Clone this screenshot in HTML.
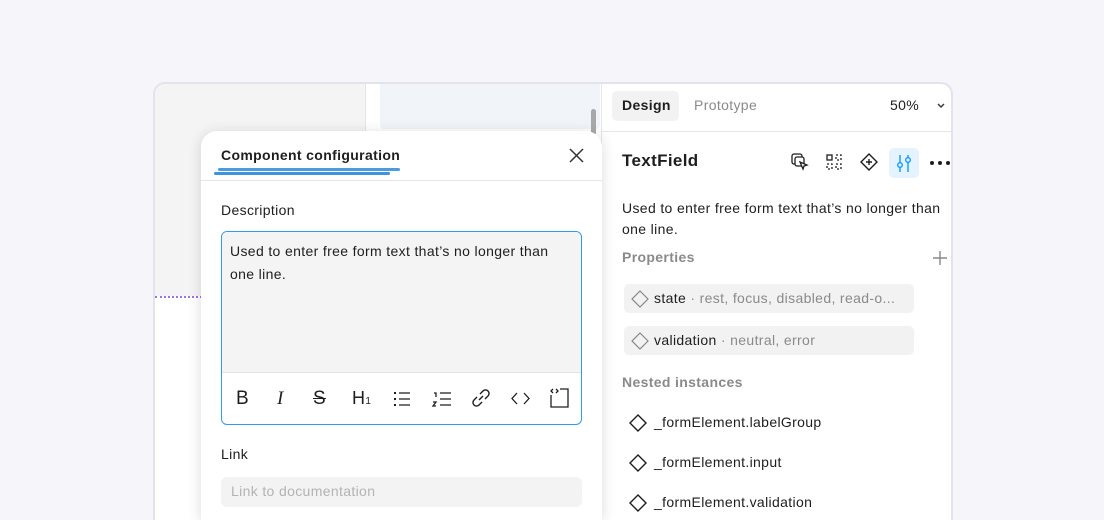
<!DOCTYPE html>
<html style="width:1104px;height:520px;overflow:hidden"><head><meta charset="utf-8"><style>
*{box-sizing:border-box;margin:0;padding:0}
body{width:1104px;height:520px;background:#f6f5fa;font-family:"Liberation Sans",sans-serif;position:relative;overflow:hidden;color:#1e1e1e;letter-spacing:0.35px}
.win{position:absolute;left:153px;top:82px;width:800px;height:438px;border:2px solid #e4e2ec;border-bottom:none;border-radius:12px 12px 0 0;background:#fff;overflow:hidden}
.abs{position:absolute}
.t{position:absolute;white-space:nowrap}
svg{position:absolute;overflow:visible}
</style></head><body>
<div class="win">
  <div class="abs" style="left:0;top:0;width:210px;height:212px;background:#f4f4f5"></div>
  <div class="abs" style="left:0;top:212px;width:47px;border-top:2px dotted #a070ee"></div>
  <div class="abs" style="left:210px;top:0;width:1px;height:70px;background:#e6e6e6"></div>
  <div class="abs" style="left:225px;top:0;width:220px;height:45px;background:#f1f5fa;border-radius:0 0 4px 4px"></div>
  <div class="abs" style="left:436px;top:25px;width:5px;height:26px;background:#a8a8a8;border-radius:3px"></div>
  <div class="abs" style="left:446px;top:0;width:1px;height:438px;background:#e6e6e6"></div>
  <div class="abs" style="left:447px;top:47px;width:360px;height:1px;background:#e6e6e6"></div>
  <div class="abs" style="left:457px;top:7px;width:67px;height:30px;background:#f2f2f2;border-radius:5px"></div>
  <div class="t" style="left:467px;top:13px;font-size:14px;font-weight:bold;color:#1e1e1e">Design</div>
  <div class="t" style="left:539px;top:13px;font-size:14px;color:#8a8a8a">Prototype</div>
  <div class="t" style="left:735px;top:13px;font-size:14px;color:#1e1e1e">50%</div>
  <svg style="left:782px;top:19px" width="8" height="6"><path d="M1 1l3 3 3-3" stroke="#333" stroke-width="1.4" fill="none"/></svg>
  <div class="t" style="left:467px;top:67px;font-size:17px;font-weight:bold">TextField</div>
  <svg style="left:636px;top:69px" width="18" height="18" fill="none" stroke="#1e1e1e" stroke-width="1.3"><rect x="1" y="1" width="10" height="10" rx="2"/><rect x="4" y="4" width="9" height="9" rx="2" fill="#fff"/><path d="M9 9l7 3-3 1-1 3z" fill="#fff"/></svg>
  <svg style="left:671px;top:70px" width="16" height="16" fill="none" stroke="#1e1e1e" stroke-width="1.3" stroke-dasharray="2 2"><rect x="1" y="1" width="5" height="5" stroke-dasharray="none"/><rect x="10" y="1" width="5" height="5"/><rect x="1" y="10" width="5" height="5"/><rect x="10" y="10" width="5" height="5"/></svg>
  <svg style="left:705px;top:69px" width="18" height="18" fill="none" stroke="#1e1e1e" stroke-width="1.4"><path d="M9 1l8 8-8 8-8-8z"/><path d="M9 6v6M6 9h6"/></svg>
  <div class="abs" style="left:734px;top:64px;width:30px;height:30px;background:#e5f3ff;border-radius:5px"></div>
  <svg style="left:741px;top:70px" width="16" height="18" fill="none" stroke="#0d99ff" stroke-width="1.4"><path d="M4 1v17M12 1v17"/><circle cx="4" cy="11" r="2.3" fill="#e5f3ff"/><circle cx="12" cy="6" r="2.3" fill="#e5f3ff"/></svg>
  <svg style="left:775px;top:77px" width="20" height="4" fill="#1e1e1e"><circle cx="2" cy="2" r="2"/><circle cx="10" cy="2" r="2"/><circle cx="18" cy="2" r="2"/></svg>
  <div class="t" style="left:467px;top:114px;font-size:14px;line-height:21px;white-space:normal;width:330px">Used to enter free form text that’s no longer than one line.</div>
  <div class="t" style="left:467px;top:165px;font-size:14px;font-weight:bold;color:#8a8a8a">Properties</div>
  <svg style="left:778px;top:167px" width="14" height="14" stroke="#888" stroke-width="1.4"><path d="M7 0v14M0 7h14"/></svg>
  <div class="abs" style="left:469px;top:200px;width:290px;height:29px;background:#f2f2f2;border-radius:5px"></div>
  <div class="abs" style="left:469px;top:242px;width:290px;height:29px;background:#f2f2f2;border-radius:5px"></div>
  <svg style="left:476px;top:206px" width="18" height="18" fill="none" stroke="#888" stroke-width="1.2"><path d="M9 1l8 8-8 8-8-8z"/></svg>
  <svg style="left:476px;top:248px" width="18" height="18" fill="none" stroke="#888" stroke-width="1.2"><path d="M9 1l8 8-8 8-8-8z"/></svg>
  <div class="t" style="left:499px;top:206px;font-size:14px">state <span style="color:#8a8a8a">· rest, focus, disabled, read-o...</span></div>
  <div class="t" style="left:499px;top:248px;font-size:14px">validation <span style="color:#8a8a8a">· neutral, error</span></div>
  <div class="t" style="left:467px;top:290px;font-size:14px;font-weight:bold;color:#8a8a8a">Nested instances</div>
  <svg style="left:474px;top:330px" width="18" height="18" fill="none" stroke="#1e1e1e" stroke-width="1.4"><path d="M9 1l8 8-8 8-8-8z"/></svg>
  <svg style="left:474px;top:370px" width="18" height="18" fill="none" stroke="#1e1e1e" stroke-width="1.4"><path d="M9 1l8 8-8 8-8-8z"/></svg>
  <svg style="left:474px;top:410px" width="18" height="18" fill="none" stroke="#1e1e1e" stroke-width="1.4"><path d="M9 1l8 8-8 8-8-8z"/></svg>
  <div class="t" style="left:499px;top:330px;font-size:14px">_formElement.labelGroup</div>
  <div class="t" style="left:499px;top:370px;font-size:14px">_formElement.input</div>
  <div class="t" style="left:499px;top:410px;font-size:14px">_formElement.validation</div>
</div>
<div class="abs" style="left:201px;top:131px;width:401px;height:389px;background:#fff;border-radius:16px 16px 0 0;box-shadow:0 2px 14px rgba(0,0,0,.14)">
  <div class="t" style="left:20px;top:16px;font-size:14px;font-weight:bold">Component configuration</div>
  <div class="abs" style="left:17px;top:37px;width:182px;height:3px;background:#4a9be0;border-radius:2px"></div>
  <div class="abs" style="left:13px;top:41px;width:176px;height:3px;background:#3d93e0;border-radius:2px"></div>
  <svg style="left:369px;top:18px" width="13" height="13" stroke="#333" stroke-width="1.5"><path d="M0 0l13 13M13 0L0 13"/></svg>
  <div class="abs" style="left:0;top:49px;width:401px;height:1px;background:#e6e6e6"></div>
  <div class="t" style="left:20px;top:71px;font-size:14px">Description</div>
  <div class="abs" style="left:20px;top:100px;width:361px;height:194px;border:1.5px solid #2d9bf0;border-radius:6px;overflow:hidden">
    <div class="abs" style="left:0;top:0;width:100%;height:141px;background:#f4f4f4;border-bottom:1px solid #e3e3e3"></div>
    <div class="t" style="left:8px;top:8px;font-size:14px;line-height:23px;white-space:normal;width:340px">Used to enter free form text that’s no longer than one line.</div>
    <div class="t" style="left:14px;top:156px;font-size:19px">B</div>
    <div class="t" style="left:55px;top:156px;font-size:19px;font-family:'Liberation Serif',serif;font-style:italic">I</div>
    <div class="t" style="left:91px;top:156px;font-size:19px;text-decoration:line-through">S</div>
    <div class="t" style="left:130px;top:156px;font-size:18px">H<span style="font-size:10px">1</span></div>
    <svg style="left:172px;top:160px" width="16" height="14" stroke="#1e1e1e" stroke-width="1.3"><path d="M5 1h11M5 7h11M5 13h11"/><path d="M0 1h2M0 7h2M0 13h2" stroke-width="2"/></svg>
    <svg style="left:211px;top:160px" width="18" height="16" stroke="#1e1e1e" stroke-width="1.3" fill="none"><path d="M7 1h11M7 7h11M7 13h11M1 1h2v4M0 10h3l-3 4h3"/></svg>
    <svg style="left:249px;top:156px" width="20" height="20" stroke="#1e1e1e" stroke-width="1.4" fill="none"><path d="M8 12l4-4"/><path d="M9 6l3-3a3.5 3.5 0 015 5l-3 3"/><path d="M11 14l-3 3a3.5 3.5 0 01-5-5l3-3"/></svg>
    <svg style="left:290px;top:161px" width="17" height="11" stroke="#1e1e1e" stroke-width="1.3" fill="none"><path d="M5 0L0 5.5 5 11M12 0l5 5.5-5 5.5"/></svg>
    <svg style="left:328px;top:156px" width="20" height="20" stroke="#1e1e1e" stroke-width="1.3" fill="none"><path d="M10 1h8v18H1V7"/><path d="M3 1L1 3l2 2M6 1l2 2-2 2"/></svg>
  </div>
  <div class="t" style="left:20px;top:315px;font-size:14px">Link</div>
  <div class="abs" style="left:20px;top:346px;width:361px;height:30px;background:#f3f3f3;border-radius:6px"></div>
  <div class="t" style="left:30px;top:352px;font-size:14px;color:#b3b3b3">Link to documentation</div>
</div>
</body></html>
